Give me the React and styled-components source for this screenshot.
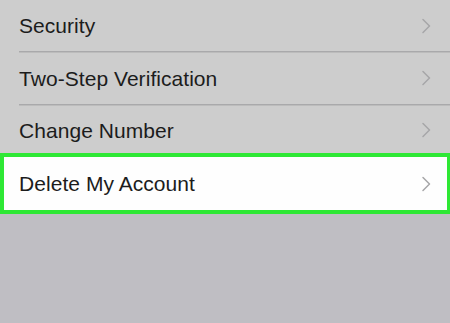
import React from 'react';
import styled, { createGlobalStyle } from 'styled-components';

const GlobalStyle = createGlobalStyle`
  html, body {
    margin: 0;
    padding: 0;
    background: #bfbec3;
  }
  body {
    width: 450px;
    height: 323px;
    overflow: hidden;
    font-family: "Liberation Sans", Arial, sans-serif;
  }
`

const Screen = styled.div`
  width: 450px;
  height: 323px;
  background: #bfbec3;
  display: flex;
  flex-direction: column;
`

const List = styled.div`
  background: #cdcdcd;
  display: flex;
  flex-direction: column;
`

const Row = styled.div`
  height: ${p => p.height}px;
  display: flex;
  align-items: center;
  justify-content: space-between;
  padding: 0 18px 0 19px;
  background: ${p => p.highlighted ? '#ffffff' : 'transparent'};
  box-sizing: border-box;
  ${p => p.highlighted && `
    border: 4px solid #2ee835;
    border-right-width: 3px;
    padding: 0 15px 0 15px;
    height: 61px;
    margin-top: -2px;
    background: #fefefe;
  `}
`

const Separator = styled.div`
  height: 1px;
  margin-left: 19px;
  background: #a9a9ab;
  box-shadow: 0 1px 0 #bcbcbc;
`

const Label = styled.span`
  font-size: 21px;
  color: #1c1c1c;
  letter-spacing: 0.05px;
  line-height: 1;
`

const Chevron = () => (
  <svg width="11" height="16" viewBox="0 0 11 16" fill="none">
    <path d="M2 1.5 L8.5 8 L2 14.5" stroke="#a6a6a8" strokeWidth="1.5" strokeLinecap="round" strokeLinejoin="round" />
  </svg>
)

const items = [
  { label: 'Security', height: 51 },
  { label: 'Two-Step Verification', height: 52 },
  { label: 'Change Number', height: 50 },
]

export default function App() {
  return (
    <>
      <GlobalStyle />
      <Screen>
        <List>
          {items.map((item, i) => (
            <React.Fragment key={item.label}>
              <Row height={item.height}>
                <Label>{item.label}</Label>
                <Chevron />
              </Row>
              {i < items.length - 1 && <Separator />}
            </React.Fragment>
          ))}
        </List>
        <Row highlighted>
          <Label>Delete My Account</Label>
          <Chevron />
        </Row>
      </Screen>
    </>
  );
}
